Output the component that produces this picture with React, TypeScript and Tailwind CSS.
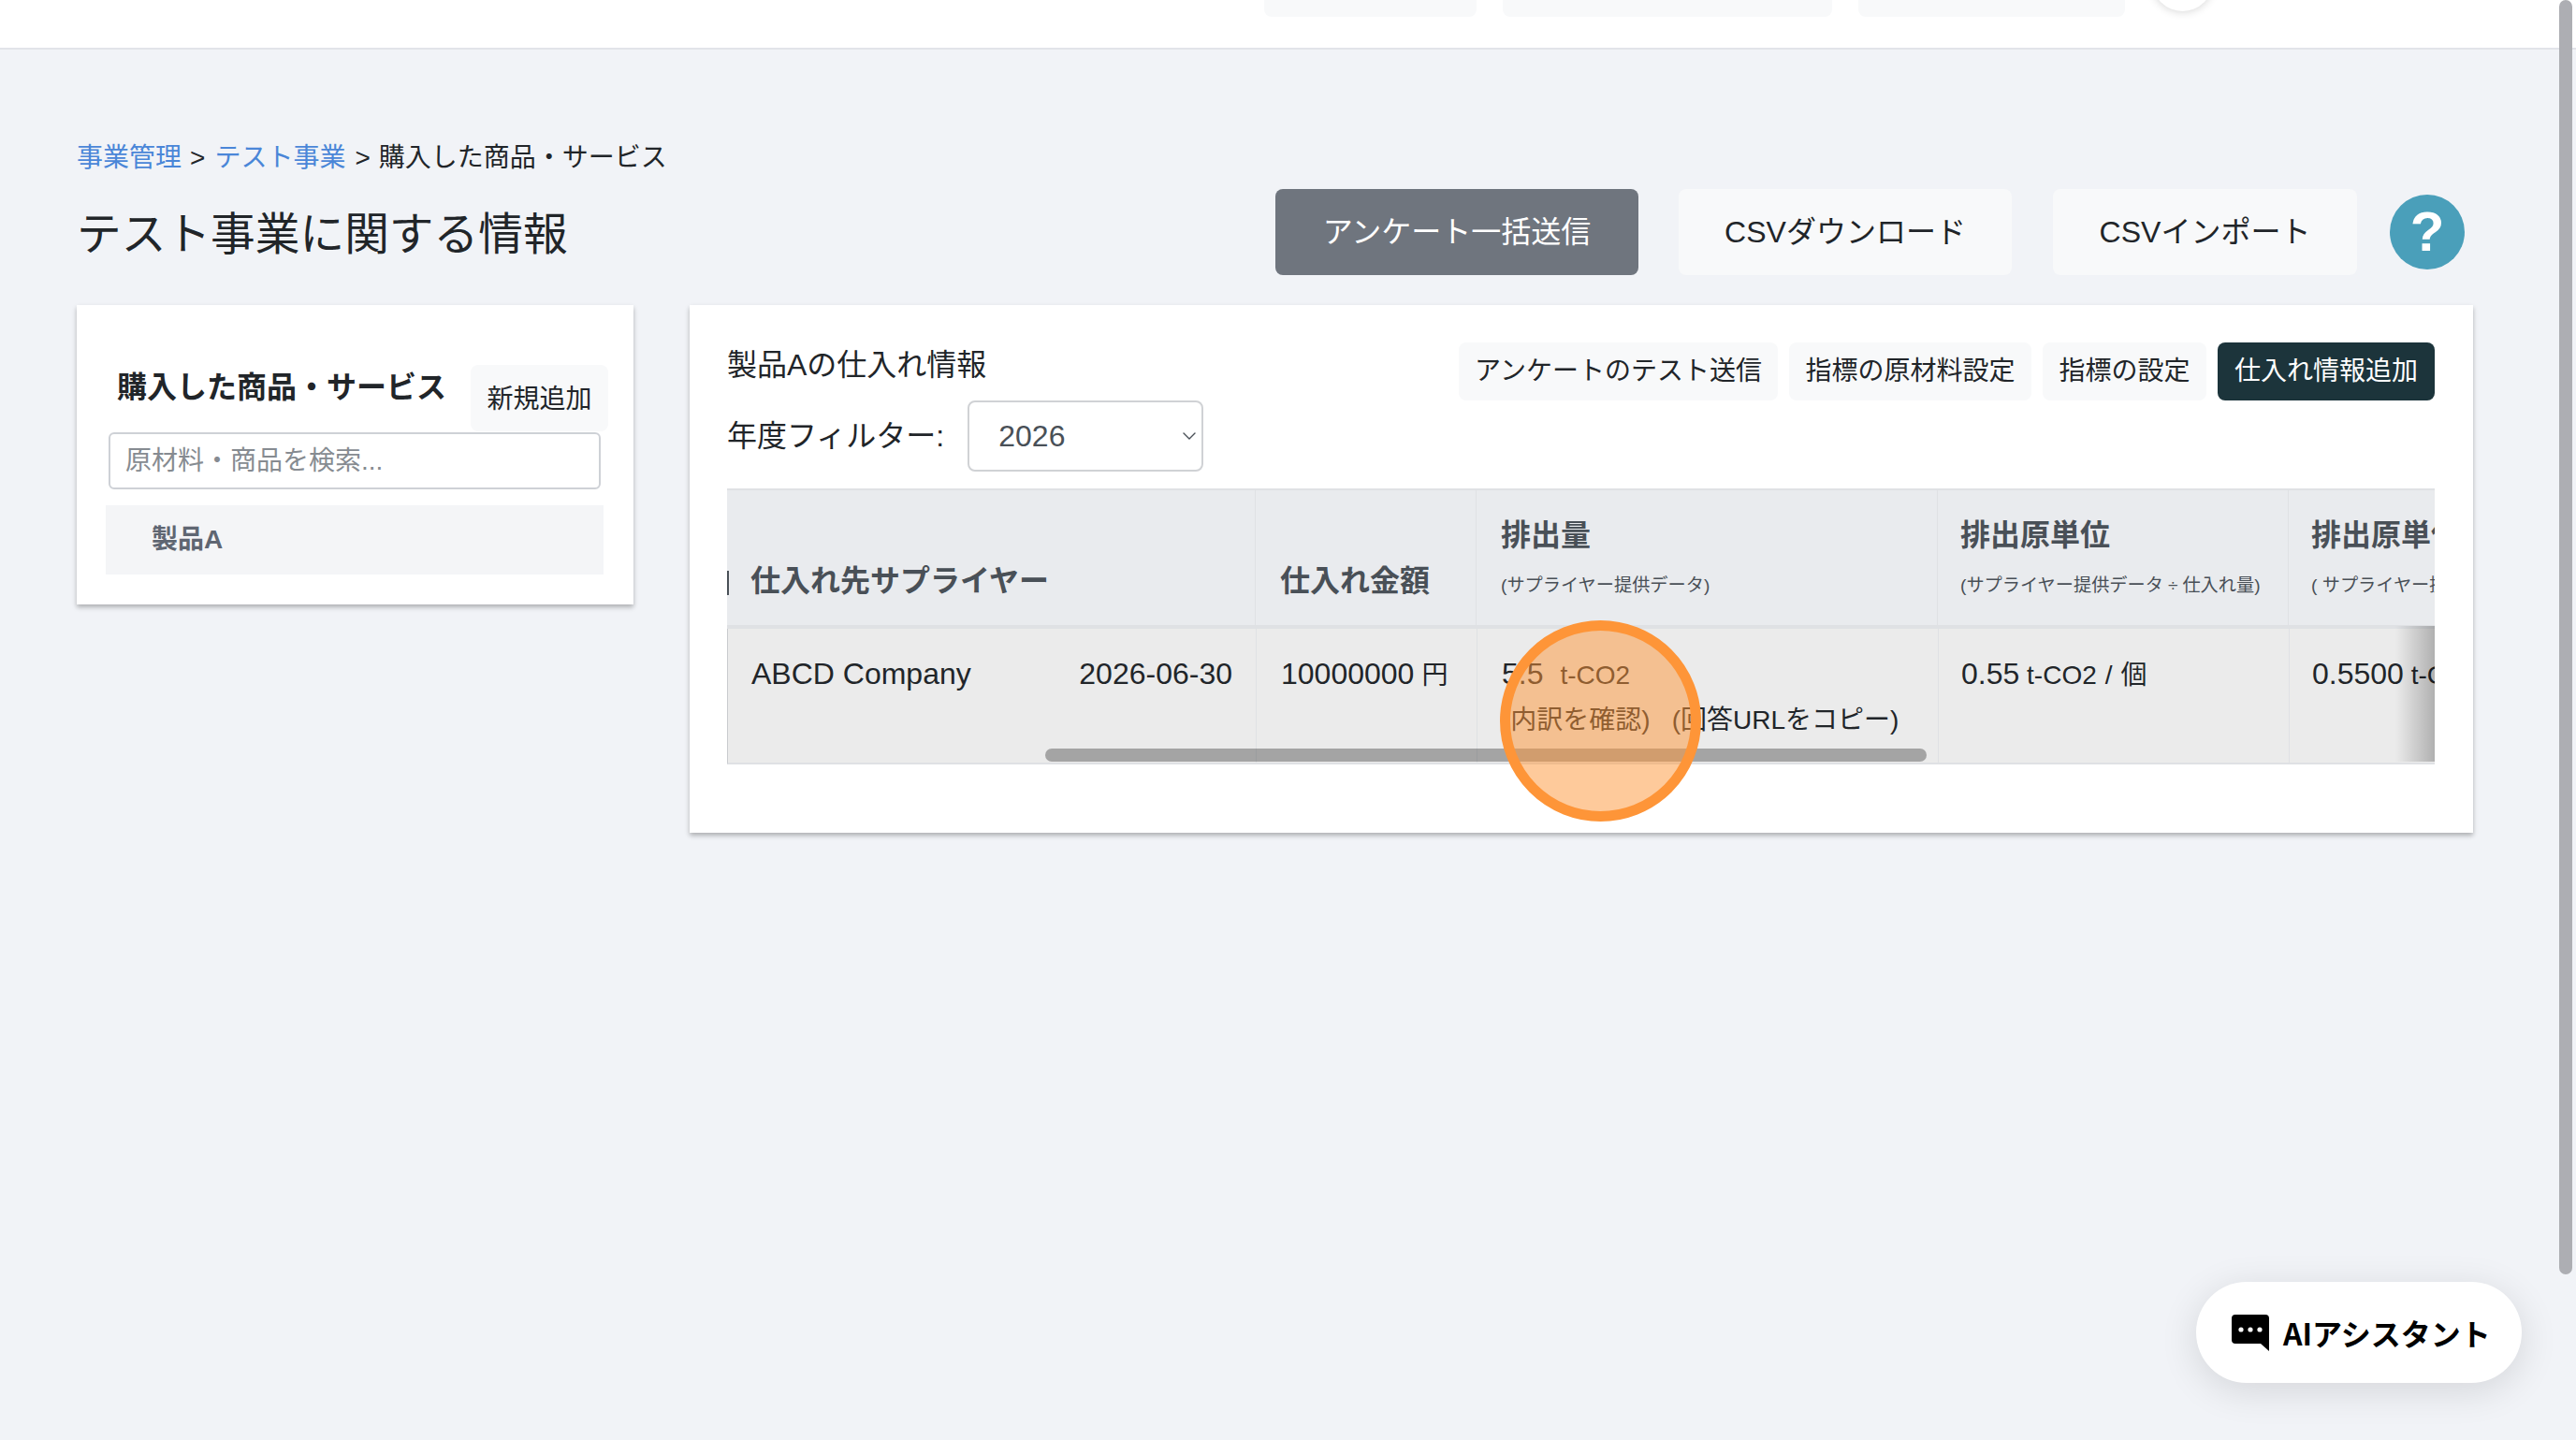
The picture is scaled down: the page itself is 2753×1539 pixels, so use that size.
import React from "react";
import { ChevronDown } from "lucide-react";

const font = "font-['Liberation_Sans','Noto_Sans_CJK_JP',sans-serif]";

function Btn({ children, className }: { children: React.ReactNode; className: string }) {
  return <button className={`flex items-center justify-center rounded-lg ${className}`}>{children}</button>;
}

function ChatIcon() {
  return (
    <svg width="40" height="39" viewBox="0 0 40 39" className="shrink-0">
      <path d="M4 0h32a4 4 0 0 1 4 4v35l-9-8H4a4 4 0 0 1-4-4V4a4 4 0 0 1 4-4z" fill="#000" />
      <circle cx="10" cy="16" r="2.6" fill="#fff" />
      <circle cx="20" cy="16" r="2.6" fill="#fff" />
      <circle cx="30" cy="16" r="2.6" fill="#fff" />
    </svg>
  );
}

export default function App() {
  return (
    <div className={`relative h-[1539px] w-[2753px] overflow-hidden bg-[#f1f3f7] text-[#212529] ${font}`}>
      <header className="flex h-[53px] items-end overflow-hidden border-b-2 border-[#e2e4e9] bg-white pb-[33px] pl-[1351px]">
        <div className="h-[60px] w-[227px] shrink-0 rounded-lg bg-[#f8f9fa]" />
        <div className="ml-[28px] h-[60px] w-[352px] shrink-0 rounded-lg bg-[#f8f9fa]" />
        <div className="ml-[28px] h-[60px] w-[285px] shrink-0 rounded-lg bg-[#f8f9fa]" />
        <div className="mb-[6px] ml-[29px] h-[65px] w-[65px] shrink-0 rounded-full bg-white shadow-[0_1px_10px_rgba(0,0,0,0.16)]" />
      </header>

      <main className="pl-[82px] pr-[110px] pt-[95px]">
        <nav className="flex h-[42px] items-center text-[28px] leading-[42px]">
          <span className="text-[#4a86d8]">事業管理</span>
          <span className="ml-[9px] mr-[10px]">&gt;</span>
          <span className="text-[#4a86d8]">テスト事業</span>
          <span className="ml-[10px] mr-[9px]">&gt;</span>
          <span>購入した商品・サービス</span>
        </nav>

        <div className="mt-[12px] flex h-[92px] items-center justify-between">
          <h1 className="pt-[6px] text-[47.7px] font-normal leading-[60px]">テスト事業に関する情報</h1>
          <div className="mr-[9px] flex items-center">
            <Btn className="h-[92px] w-[388px] bg-[#6f757e] text-[32px] text-white">アンケート一括送信</Btn>
            <Btn className="ml-[43px] h-[92px] w-[356px] bg-[#f8f9fa] text-[32px]">CSVダウンロード</Btn>
            <Btn className="ml-[44px] h-[92px] w-[325px] bg-[#f8f9fa] text-[32px]">CSVインポート</Btn>
            <div className="ml-[35px] flex h-[80px] w-[80px] items-center justify-center rounded-full bg-[#4a9fba] text-[60px] font-bold leading-none text-white">?</div>
          </div>
        </div>

        <div className="mt-[32px] flex items-start gap-[60px]">
          <aside className="h-[320px] w-[595px] shrink-0 bg-white pl-[31px] pr-[32px] pt-[64px] shadow-[0_3px_5px_rgba(0,0,0,0.28)]">
            <div className="flex h-[72px] items-start justify-between">
              <h2 className="pl-[12px] pt-[1px] text-[32px] font-bold leading-[46px]">購入した商品・サービス</h2>
              <Btn className="-mr-[5px] h-[71px] w-[147px] bg-[#f8f9fa] pt-[2px] text-[28px]">新規追加</Btn>
            </div>
            <input
              readOnly
              placeholder="原材料・商品を検索..."
              className="mx-[3px] block h-[61px] w-[526px] rounded-md border-2 border-[#ced1d6] bg-white px-[16px] text-[28px] placeholder:text-[#868b91]"
            />
            <div className="mt-[17px] flex h-[74px] items-center bg-[#f4f5f7] pl-[49px] text-[28px] font-bold text-[#5f6672]">製品A</div>
          </aside>

          <section className="h-[564px] min-w-0 flex-1 bg-white pl-[40px] pr-[41px] pt-[40px] shadow-[0_3px_5px_rgba(0,0,0,0.28)]">
            <div className="flex h-[62px] items-start justify-between">
              <p className="pt-[2px] text-[32px] leading-[44px]">製品Aの仕入れ情報</p>
              <div className="flex gap-[12px] text-[28px]">
                <Btn className="h-[62px] w-[341px] bg-[#f8f9fa]">アンケートのテスト送信</Btn>
                <Btn className="h-[62px] w-[259px] bg-[#f8f9fa]">指標の原材料設定</Btn>
                <Btn className="h-[62px] w-[175px] bg-[#f8f9fa]">指標の設定</Btn>
                <Btn className="h-[62px] w-[232px] bg-[#1c343b] text-white">仕入れ情報追加</Btn>
              </div>
            </div>
            <div className="flex h-[76px] items-center">
              <span className="text-[32px]">年度フィルター:</span>
              <div className="relative ml-[25px]">
                <select className="block h-[76px] w-[252px] appearance-none rounded-lg border-2 border-[#d0d2d5] bg-white pl-[31px] text-[32px] text-[#495057]">
                  <option>2026</option>
                </select>
                <ChevronDown className="pointer-events-none absolute right-[3px] top-[26px] h-[24px] w-[24px] text-[#495057]" strokeWidth={1.4} />
              </div>
            </div>

            <div className="relative mt-[18px] h-[295px] w-[1825px] overflow-hidden border-t-2 border-[#dfe1e4]">
              <div className="grid h-[148px] grid-cols-[564px_236px_493px_375px_157px] border-b-4 border-[#dfe1e4] bg-[#e9ebee] font-bold text-[#495057]">
                <div className="relative flex items-center overflow-hidden whitespace-nowrap pl-[25px] pt-[50px] text-[32px]">
                  <span className="absolute left-0 top-[86px] h-[26px] w-[2px] bg-[#495057]" />
                  仕入れ先サプライヤー
                </div>
                <div className="flex items-center border-l border-[#dfe1e4] pl-[26px] pt-[50px] text-[32px]">仕入れ金額</div>
                <div className="border-l border-[#dfe1e4] pl-[26px] pt-[26px]">
                  <div className="text-[32px] leading-[44px]">排出量</div>
                  <div className="mt-[18px] text-[19.2px] font-normal leading-[28px]">(サプライヤー提供データ)</div>
                </div>
                <div className="border-l border-[#dfe1e4] pl-[24px] pt-[26px]">
                  <div className="text-[32px] leading-[44px]">排出原単位</div>
                  <div className="mt-[18px] whitespace-nowrap text-[19.2px] font-normal leading-[28px]">
                    (サプライヤー提供データ<span className="mx-[5px]">÷</span>仕入れ量)
                  </div>
                </div>
                <div className="overflow-hidden whitespace-nowrap border-l border-[#dfe1e4] pl-[24px] pt-[26px]">
                  <div className="text-[32px] leading-[44px]">排出原単位</div>
                  <div className="mt-[18px] text-[19.2px] font-normal leading-[28px]">( サプライヤー提供データ ÷ 仕入れ量)</div>
                </div>
              </div>
              <div className="grid h-[145px] grid-cols-[564px_236px_493px_375px_157px] border-b-2 border-[#dfe1e4] border-l border-l-[#c9cbce] bg-[#ebebeb]">
                <div className="flex justify-between pl-[25px] pr-[25px] pt-[26px] text-[32px] leading-[44px]">
                  <span>ABCD Company</span>
                  <span>2026-06-30</span>
                </div>
                <div className="border-l border-[#dfe1e4] pl-[26px] pt-[26px] text-[32px] leading-[44px]">
                  10000000<span className="ml-[8px] text-[28px]">円</span>
                </div>
                <div className="whitespace-nowrap border-l border-[#dfe1e4] pl-[26px] pt-[26px] text-[28px] leading-[44px]">
                  <div>
                    <span className="text-[32px]">5.5</span>
                    <span className="ml-[18px]">t-CO2</span>
                  </div>
                  <div className="mt-[4px] flex gap-[23px]">
                    <span>(内訳を確認)</span>
                    <span>(回答URLをコピー)</span>
                  </div>
                </div>
                <div className="border-l border-[#dfe1e4] pl-[24px] pt-[26px] text-[28px] leading-[44px]">
                  <span className="text-[32px]">0.55</span> t-CO2<span className="mx-[9px]">/</span>個
                </div>
                <div className="overflow-hidden whitespace-nowrap border-l border-[#dfe1e4] pl-[24px] pt-[26px] text-[28px] leading-[44px]">
                  <span className="text-[32px]">0.5500</span> t-CO2 / 個
                </div>
              </div>
              <div className="absolute bottom-[3px] right-0 h-[145px] w-[42px] bg-linear-to-r from-transparent to-black/25" />
              <div className="absolute bottom-[3px] left-[340px] h-[14px] w-[942px] rounded-full bg-black/30" />
            </div>
          </section>
        </div>
      </main>

      <div className="absolute bottom-[61px] right-[58px] flex h-[108px] w-[348px] items-center gap-[15px] rounded-full bg-white pl-[38px] font-['Noto_Sans_CJK_JP',sans-serif] text-[32px] font-bold text-black shadow-[0_8px_40px_rgba(0,0,0,0.12)]">
        <ChatIcon />
        <span>AIアシスタント</span>
      </div>

      <div className="absolute right-[4px] top-0 h-[1362px] w-[14px] rounded-full bg-[#adaeb3]" />
      <div className="pointer-events-none absolute left-[1603px] top-[663px] h-[215px] w-[215px] rounded-full border-[11px] border-[#fe9538] bg-[#fe9538]/50" />
    </div>
  );
}
